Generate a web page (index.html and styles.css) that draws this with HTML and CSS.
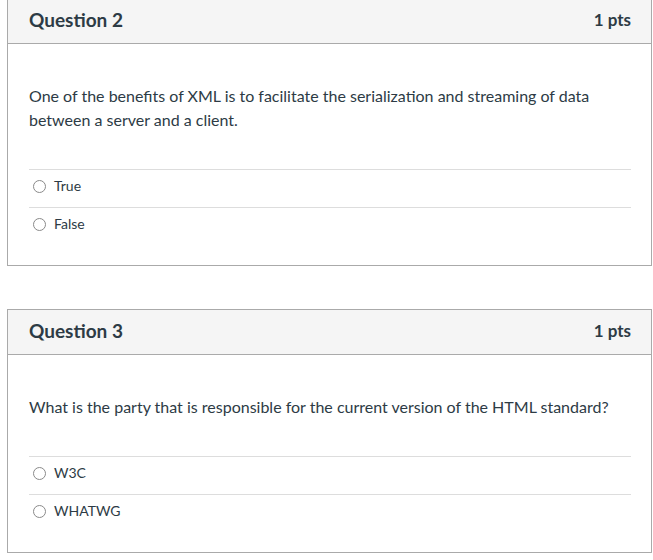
FILE: index.html
```html
<!DOCTYPE html>
<html>
<head>
<meta charset="utf-8">
<link rel="stylesheet" href="styles.css">
</head>
<body>
<div class="quiz">
  <div class="card">
    <div class="card-head">
      <span class="q-title">Question 2</span>
      <span class="q-pts">1 pts</span>
    </div>
    <div class="card-body">
      <div class="q-text">One of the benefits of XML is to facilitate the serialization and streaming of data between a server and a client.</div>
      <div class="answers">
        <div class="answer"><span class="radio"></span><span class="a-label">True</span></div>
        <div class="answer"><span class="radio"></span><span class="a-label">False</span></div>
      </div>
    </div>
  </div>
  <div class="card">
    <div class="card-head">
      <span class="q-title">Question 3</span>
      <span class="q-pts">1 pts</span>
    </div>
    <div class="card-body">
      <div class="q-text">What is the party that is responsible for the current version of the HTML standard?</div>
      <div class="answers">
        <div class="answer"><span class="radio"></span><span class="a-label">W3C</span></div>
        <div class="answer"><span class="radio"></span><span class="a-label">WHATWG</span></div>
      </div>
    </div>
  </div>
</div>
</body>
</html>
```

FILE: styles.css
```css
html, body {
  margin: 0;
  padding: 0;
  background: #fff;
}
body {
  font-family: Lato, "Open Sans", sans-serif;
  color: #2d3b45;
}
.quiz {
  margin: -2px 1px 0 7px;
  display: flex;
  flex-direction: column;
  gap: 43px;
}
.card {
  border: 1px solid #aaaaaa;
}
.card-head {
  background: #f5f5f5;
  border-bottom: 1px solid #aaaaaa;
  height: 45px;
  box-sizing: border-box;
  padding: 0 20px 3px 21px;
  display: flex;
  align-items: center;
  justify-content: space-between;
}
.q-title {
  font-size: 19px;
  font-weight: 700;
}
.q-pts {
  font-size: 17px;
  font-weight: 700;
}
.card-body {
  padding: 40px 20px 20px 21px;
}
.q-text {
  font-size: 16px;
  line-height: 24px;
}
.answers {
  margin-top: 37px;
}
.answer {
  border-top: 1px solid #dddddd;
  height: 38px;
  box-sizing: border-box;
  display: flex;
  align-items: center;
  padding-left: 4px;
  padding-bottom: 5px;
  font-size: 14px;
}
.radio {
  width: 13px;
  height: 13px;
  border: 1px solid #8a8a8a;
  border-radius: 50%;
  box-sizing: border-box;
  margin-right: 8px;
}
.a-label {
  line-height: 20px;
}
```
